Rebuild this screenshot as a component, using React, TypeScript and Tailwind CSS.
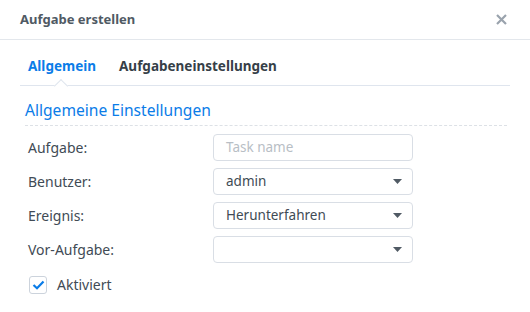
const fields = [
  { label: "Aufgabe:", value: "", placeholder: "Task name", select: false },
  { label: "Benutzer:", value: "admin", select: true },
  { label: "Ereignis:", value: "Herunterfahren", select: true },
  { label: "Vor-Aufgabe:", value: "", select: true },
]

const App: React.FC = () => {
  return (
    <div className="w-[530px] h-[312px] bg-white overflow-hidden font-['Noto_Sans',sans-serif] text-[#414b55]">
      {/* Header */}
      <div className="flex items-center justify-between h-[40px] pl-[20px] pr-[23px] border-b border-[#e3e7ec]">
        <h1 className="text-[13px] font-bold text-[#505a64]">Aufgabe erstellen</h1>
        <button className="text-[#9aa3ad]">
          <svg width="11" height="11" viewBox="0 0 11 11">
            <path d="M1 1 L10 10 M10 1 L1 10" stroke="currentColor" strokeWidth="2.2" />
          </svg>
        </button>
      </div>

      <div className="pl-[20px] pr-[20px]">
        {/* Tabs */}
        <div className="relative flex gap-[23px] h-[46px] items-end pb-[9px] pl-[8px] border-b border-[#dfe5ee]">
          <span className="text-[13.5px] font-bold text-[#0a7ce8]">Allgemein</span>
          <span className="text-[13.5px] font-bold text-[#363f48]">Aufgabeneinstellungen</span>
          <div className="absolute left-[36px] bottom-[-6px] w-[10px] h-[10px] bg-white border-l border-t border-[#dfe5ee] rotate-45" />
        </div>

        {/* Section */}
        <div className="pt-[13px] pl-[5px] pr-[3px]">
          <h2 className="text-[15.6px] text-[#0a7ce8] leading-[22px]">Allgemeine Einstellungen</h2>
          <div className="mt-[4px] border-b border-dashed border-[#dde1e6]" />
        </div>

        <div className="flex flex-col gap-[7px] mt-[8px]">
          {fields.map((f) => (
            <div key={f.label} className="flex items-center">
              <label className="w-[193px] pl-[8px] text-[14px] text-[#414b55]">{f.label}</label>
              <div className="flex items-center justify-between w-[200px] h-[27px] rounded-[4px] border border-[#d9dee5] pl-[12px] pr-[10px] text-[13.5px]">
                {f.value ? (
                  <span className="text-[#414b55]">{f.value}</span>
                ) : (
                  <span className="text-[#b8bec5]">{f.placeholder ?? ""}</span>
                )}
                {f.select && (
                  <svg width="9" height="5" viewBox="0 0 9 5">
                    <path d="M0 0 H9 L4.5 5 Z" fill="#505a64" />
                  </svg>
                )}
              </div>
            </div>
          ))}
        </div>

        {/* Checkbox */}
        <div className="flex items-center gap-[10px] mt-[11px] pl-[9px]">
          <div className="flex items-center justify-center w-[18px] h-[18px] rounded-[3px] border border-[#ccd3dc]">
            <svg width="13" height="10" viewBox="0 0 13 10">
              <path d="M1.5 5 L5 8.3 L11.5 1.5" fill="none" stroke="#0a7ce8" strokeWidth="2.2" />
            </svg>
          </div>
          <span className="text-[14px] text-[#414b55]">Aktiviert</span>
        </div>
      </div>
    </div>
  )
}

export default App
